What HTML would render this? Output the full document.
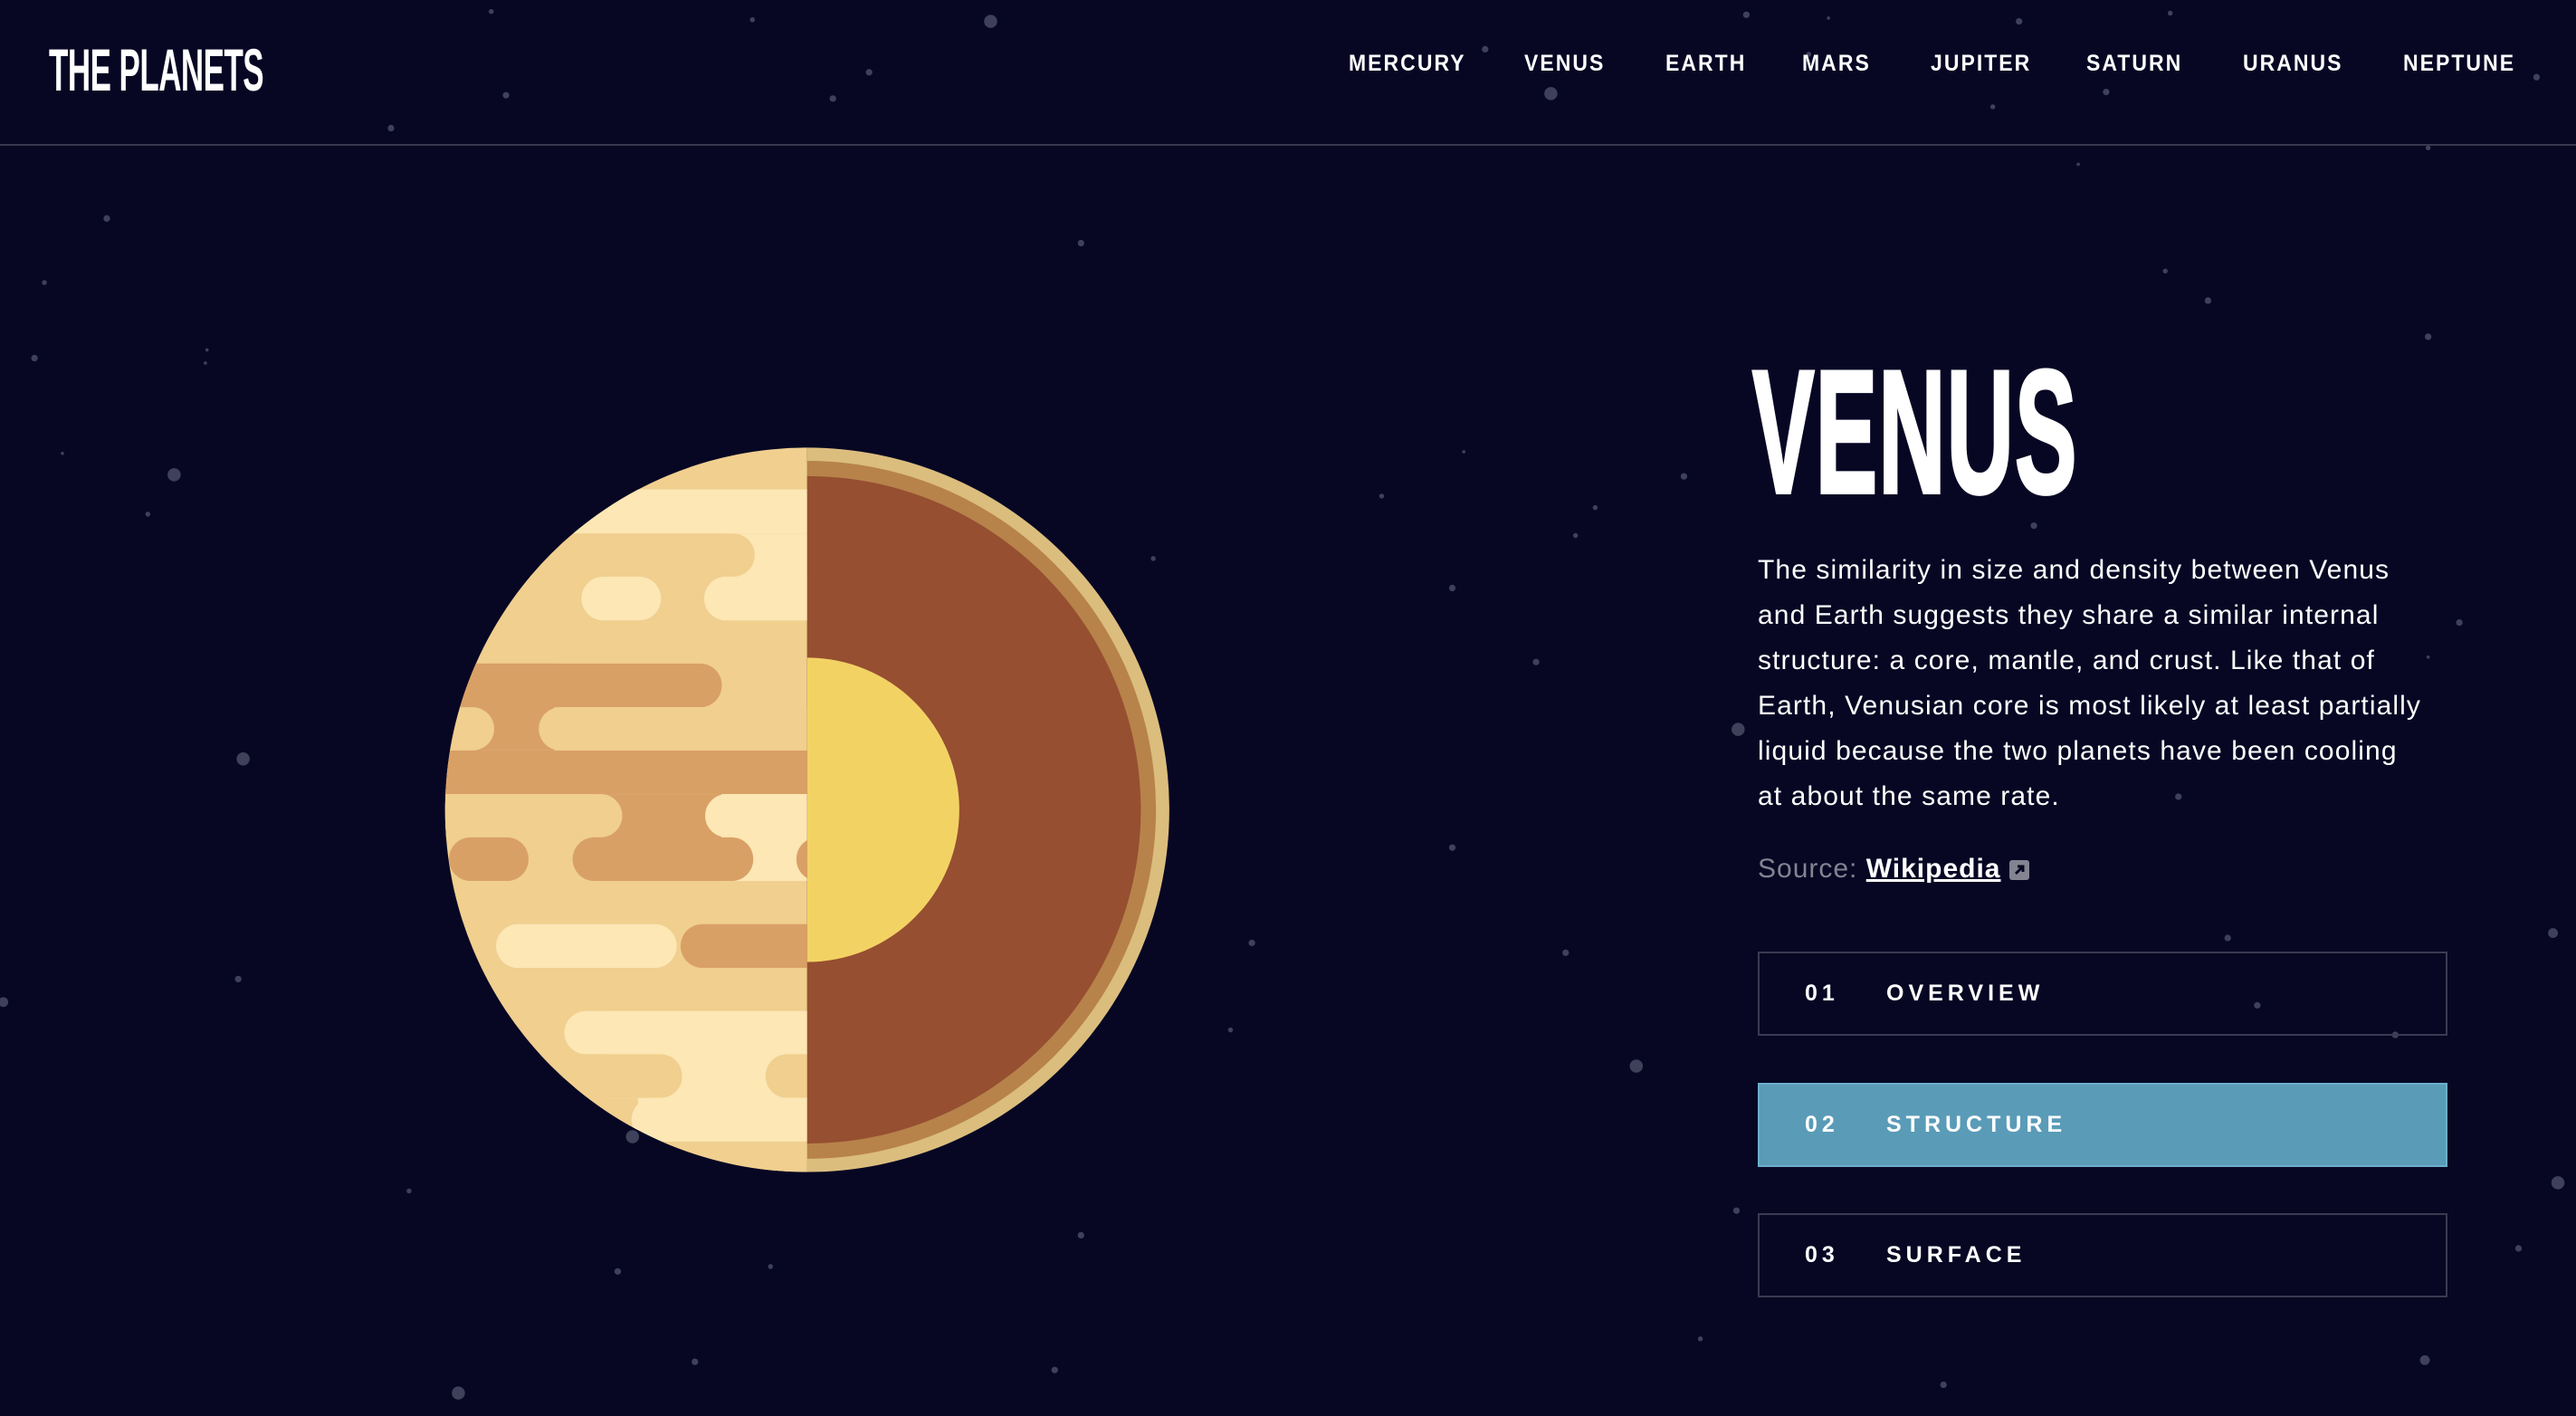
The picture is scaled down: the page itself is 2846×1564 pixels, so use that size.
<!DOCTYPE html>
<html><head><meta charset="utf-8"><style>
*{margin:0;padding:0;box-sizing:border-box}
html,body{width:2846px;height:1564px;overflow:hidden;background:#070724;font-family:"Liberation Sans",sans-serif;color:#fff}
.abs{position:absolute}
#stars{position:absolute;left:0;top:0}
.logo{left:54px;top:44px;font-size:66px;font-weight:700;letter-spacing:-1px;transform:scaleX(0.53);transform-origin:left top;white-space:nowrap;line-height:66px}
.nav{top:56px;font-size:25px;font-weight:700;letter-spacing:2.2px;line-height:28px;transform:scaleX(0.92);transform-origin:left top}
.line{left:0;top:159px;width:2846px;height:2px;background:#38384f}
.title{left:1936px;top:378px;font-size:194px;font-weight:700;line-height:200px;transform:scaleX(0.53);transform-origin:left top;letter-spacing:2px;-webkit-text-stroke:4px #fff}
.para{left:1942px;top:605px;font-size:30px;line-height:50px;white-space:nowrap;letter-spacing:1.1px}
.src{left:1942px;top:940px;font-size:30px;line-height:40px;color:#838391;letter-spacing:1px}
.src a{color:#fff;font-weight:700;text-decoration:underline;text-decoration-thickness:3px}
.btn{left:1942px;width:762px;height:93px;border:2px solid #3a3a52;font-size:25px;font-weight:700;letter-spacing:5px;line-height:89px}
.btn .n{position:absolute;left:50px}
.btn .t{position:absolute;left:140px}
.act{background:#5a9bb7;border-color:#6caecb}
</style></head><body>
<svg id="stars" width="2846" height="1564" viewBox="0 0 1568 862" preserveAspectRatio="none" fill="#3f405a">
<circle cx="65" cy="133" r="2"/><circle cx="27" cy="172" r="1.5"/><circle cx="21" cy="218" r="2"/><circle cx="126" cy="213" r="1"/><circle cx="125" cy="221" r="1"/><circle cx="106" cy="289" r="4"/><circle cx="90" cy="313" r="1.5"/><circle cx="38" cy="276" r="1"/><circle cx="148" cy="462" r="4"/><circle cx="145" cy="596" r="2"/><circle cx="2" cy="610" r="3"/><circle cx="249" cy="725" r="1.5"/><circle cx="385" cy="692" r="4"/><circle cx="376" cy="774" r="2"/><circle cx="469" cy="771" r="1.5"/><circle cx="279" cy="848" r="4"/><circle cx="423" cy="829" r="2"/><circle cx="658" cy="148" r="2"/><circle cx="603" cy="13" r="4"/><circle cx="458" cy="12" r="1.5"/><circle cx="299" cy="7" r="1.5"/><circle cx="238" cy="78" r="2"/><circle cx="308" cy="58" r="2"/><circle cx="529" cy="44" r="2"/><circle cx="507" cy="60" r="2"/><circle cx="944" cy="57" r="4"/><circle cx="904" cy="30" r="2"/><circle cx="1063" cy="9" r="2"/><circle cx="1229" cy="13" r="2"/><circle cx="1282" cy="56" r="2"/><circle cx="1321" cy="8" r="1.5"/><circle cx="1478" cy="90" r="1.5"/><circle cx="1544" cy="47" r="2"/><circle cx="1344" cy="183" r="2"/><circle cx="1318" cy="165" r="1.5"/><circle cx="1478" cy="205" r="2"/><circle cx="1025" cy="290" r="2"/><circle cx="971" cy="309" r="1.5"/><circle cx="959" cy="326" r="1.5"/><circle cx="891" cy="275" r="1"/><circle cx="841" cy="302" r="1.5"/><circle cx="884" cy="358" r="2"/><circle cx="702" cy="340" r="1.5"/><circle cx="935" cy="403" r="2"/><circle cx="1058" cy="444" r="4"/><circle cx="1326" cy="485" r="2"/><circle cx="1238" cy="320" r="2"/><circle cx="1497" cy="379" r="2"/><circle cx="1356" cy="571" r="2"/><circle cx="1458" cy="630" r="2"/><circle cx="1374" cy="612" r="2"/><circle cx="1554" cy="568" r="3"/><circle cx="953" cy="580" r="2"/><circle cx="884" cy="516" r="2"/><circle cx="762" cy="574" r="2"/><circle cx="749" cy="627" r="1.5"/><circle cx="996" cy="649" r="4"/><circle cx="658" cy="752" r="2"/><circle cx="1557" cy="720" r="4"/><circle cx="1533" cy="760" r="2"/><circle cx="1476" cy="828" r="3"/><circle cx="1183" cy="843" r="2"/><circle cx="1057" cy="737" r="2"/><circle cx="1035" cy="815" r="1.5"/><circle cx="642" cy="834" r="2"/><circle cx="1113" cy="11" r="1"/><circle cx="1101" cy="33" r="1.5"/><circle cx="1265" cy="100" r="1"/><circle cx="1213" cy="65" r="1.5"/><circle cx="1478" cy="400" r="1"/>
</svg>

<div class="abs logo">THE PLANETS</div>
<div class="abs nav" style="left:1490px">MERCURY</div>
<div class="abs nav" style="left:1684px">VENUS</div>
<div class="abs nav" style="left:1840px">EARTH</div>
<div class="abs nav" style="left:1991px">MARS</div>
<div class="abs nav" style="left:2133px">JUPITER</div>
<div class="abs nav" style="left:2305px">SATURN</div>
<div class="abs nav" style="left:2478px">URANUS</div>
<div class="abs nav" style="left:2655px">NEPTUNE</div>
<div class="abs line"></div>

<svg class="abs" style="left:450px;top:470px" width="850" height="850" viewBox="0 0 1568 1568">
<defs><clipPath id="c"><circle cx="815" cy="783" r="738"/></clipPath></defs>
<g clip-path="url(#c)">
<rect x="0" y="0" width="815" height="1568" fill="#f0cf8f"/>
<g fill="#fce7b5">
<rect x="0" y="130" width="815" height="90"/>
<rect x="640" y="220" width="175" height="177"/>
</g>
<rect x="-100" y="220" width="808" height="88" rx="44" fill="#f0cf8f"/>
<rect x="605" y="308" width="300" height="89" rx="44" fill="#fce7b5"/>
<rect x="355" y="308" width="162" height="89" rx="44" fill="#fce7b5"/>
<g fill="#d9a066">
<rect x="0" y="485" width="300" height="177"/>
<rect x="-100" y="485" width="741" height="89" rx="44"/>
<rect x="0" y="662" width="815" height="89"/>
</g>
<rect x="-100" y="574" width="277" height="88" rx="44" fill="#f0cf8f"/>
<rect x="268" y="574" width="640" height="88" rx="44" fill="#f0cf8f"/>
<rect x="380" y="751" width="260" height="177" fill="#d9a066"/>
<rect x="640" y="751" width="175" height="177" fill="#fce7b5"/>
<rect x="-100" y="751" width="538" height="88" rx="44" fill="#f0cf8f"/>
<rect x="607" y="751" width="300" height="88" rx="44" fill="#fce7b5"/>
<rect x="337" y="839" width="368" height="89" rx="44" fill="#d9a066"/>
<rect x="85" y="839" width="162" height="89" rx="44" fill="#d9a066"/>
<rect x="793" y="839" width="120" height="89" rx="44" fill="#d9a066"/>
<rect x="181" y="1016" width="368" height="89" rx="44" fill="#fce7b5"/>
<rect x="557" y="1016" width="350" height="89" rx="44" fill="#d9a066"/>
<rect x="400" y="1193" width="415" height="266" fill="#fce7b5"/>
<rect x="320" y="1193" width="600" height="88" rx="44" fill="#fce7b5"/>
<rect x="-100" y="1281" width="660" height="89" rx="44" fill="#f0cf8f"/>
<rect x="730" y="1281" width="200" height="89" rx="44" fill="#f0cf8f"/>
<rect x="0" y="1370" width="470" height="89" fill="#f0cf8f"/>
<rect x="457" y="1370" width="400" height="89" rx="44" fill="#fce7b5"/>
<rect x="0" y="1459" width="815" height="120" fill="#f0cf8f"/>
</g>
<path d="M815 45 A738 738 0 0 1 815 1521 Z" fill="#dbbd7e"/>
<path d="M815 72 A711 711 0 0 1 815 1494 Z" fill="#b7834a"/>
<path d="M815 103 A680 680 0 0 1 815 1463 Z" fill="#964f31"/>
<path d="M815 473 A310 310 0 0 1 815 1093 Z" fill="#f3d264"/>
</svg>

<div class="abs title">VENUS</div>
<div class="abs para">The similarity in size and density between Venus<br>and Earth suggests they share a similar internal<br>structure: a core, mantle, and crust. Like that of<br>Earth, Venusian core is most likely at least partially<br>liquid because the two planets have been cooling<br>at about the same rate.</div>
<div class="abs src">Source: <a>Wikipedia</a> <svg width="22" height="22" viewBox="0 0 22 22" style="vertical-align:-3px"><rect width="22" height="22" rx="3" fill="#838391"/><path d="M7 15 L15 7 M9 7 H15 V13" stroke="#070724" stroke-width="3" fill="none"/></svg></div>

<div class="abs btn" style="top:1051px"><span class="n">01</span><span class="t">OVERVIEW</span></div>
<div class="abs btn act" style="top:1196px"><span class="n">02</span><span class="t">STRUCTURE</span></div>
<div class="abs btn" style="top:1340px"><span class="n">03</span><span class="t">SURFACE</span></div>
</body></html>
